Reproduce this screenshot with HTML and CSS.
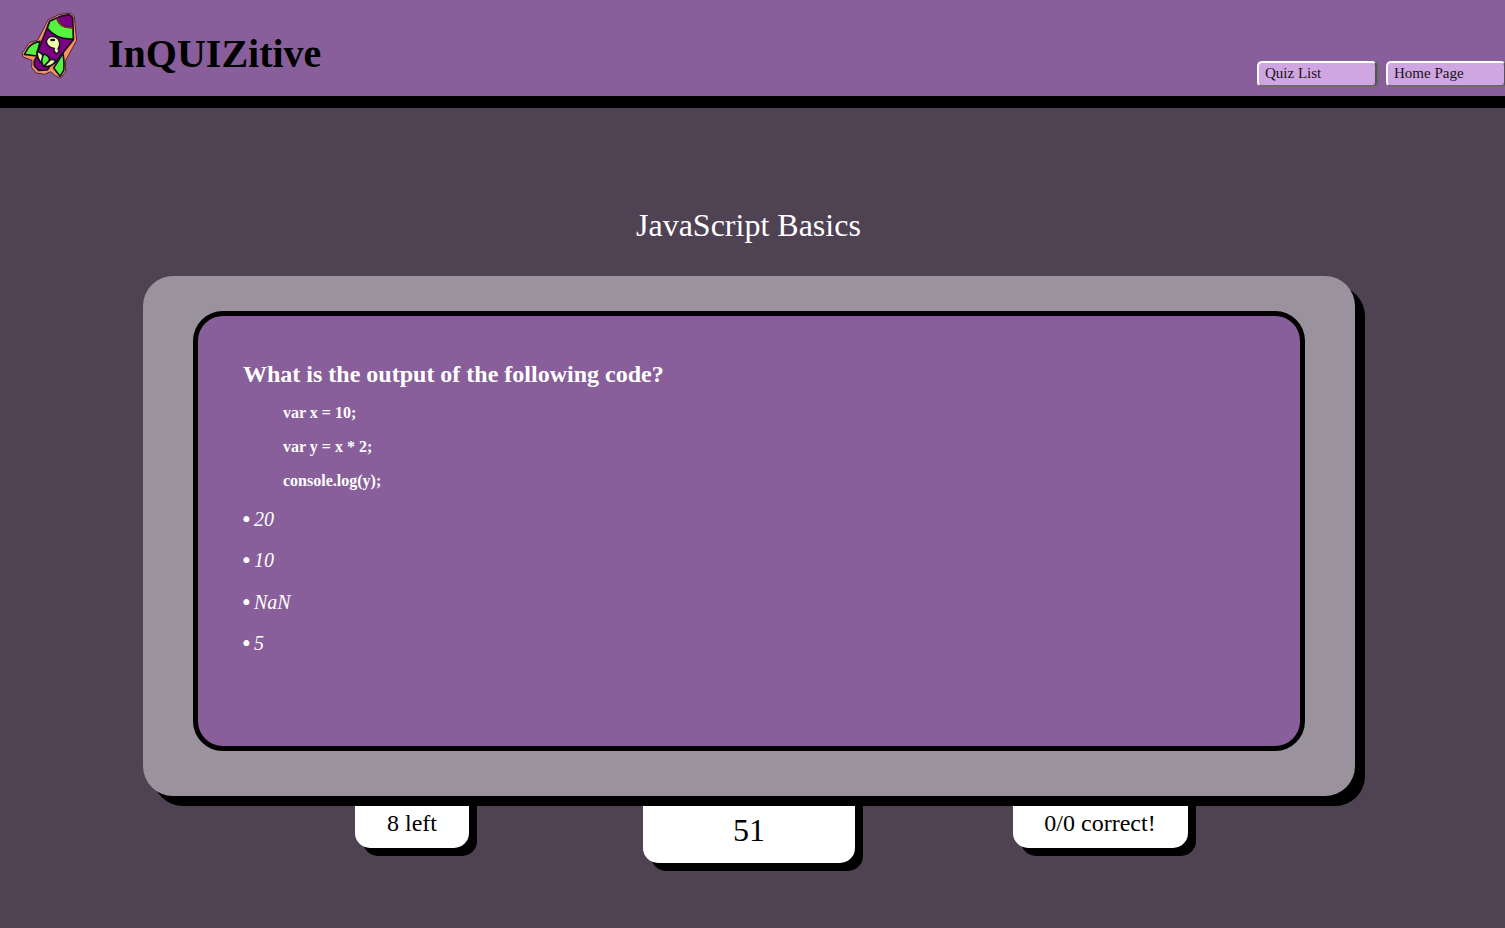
FILE: index.html
```html
<!DOCTYPE html>
<html lang="en">
<head>
<meta charset="utf-8">
<title>InQUIZitive</title>
<link rel="stylesheet" href="styles.css">
</head>
<body>
<header class="header">
  <svg class="logo" viewBox="0 0 240 270" aria-hidden="true">
    <path d="M181 39L193 50L200 121L167 181L167 216L151 235L136 227L122 215L104 223L79 219L65 203L66 181L39 171L36 160L58 128L83 120L106 76L114 60L146 44Z" fill="#f9915a" stroke="#4a2444" stroke-width="3" stroke-linejoin="round"/>
    <g stroke="#171020" stroke-width="5" stroke-linejoin="round">
      <path d="M90 124Q65 129 55 143L43 163L80 168Z" fill="#55f23f"/>
      <path d="M159 160Q164 193 161 212L150 229L131 204Z" fill="#55f23f"/>
      <path d="M79 172Q68 188 75 200L86 211L112 210L120 198Z" fill="#7b0082"/>
      <path d="M118 67L148 50L178 44L188 53L190 119L134 190L82 158Z" fill="#7b0082"/>
      <path d="M119 64L140 54Q150 86 189 82L190 117Q139 120 112 85Z" fill="#55f23f"/>
      <path d="M81 154Q97 158 101 171L96 190Q82 181 81 154Z" fill="#efffa9"/>
      <path d="M137 182Q124 174 113 184L100 199Q127 203 137 182Z" fill="#efffa9"/>
      <path d="M103 161Q121 170 118 182L101 200Q88 184 103 161Z" fill="#55f23f"/>
    </g>
    <path d="M140 53Q153 88 189 83" fill="none" stroke="#9b2638" stroke-width="4"/>
    <path d="M109 125Q113 108 129 110Q147 112 149 130Q149 140 144 147L148 154L139 161L132 153L133 145Q113 143 109 125Z" fill="#efffa9" stroke="#171020" stroke-width="4"/>
    <ellipse cx="128" cy="120" rx="8" ry="4" fill="#171020"/>
  </svg>
  <h1 class="brand">InQUIZitive</h1>
  <nav class="nav">
    <a class="nav-link">Quiz List</a>
    <a class="nav-link">Home Page</a>
  </nav>
</header>
<main class="main">
  <h2 class="quiz-title">JavaScript Basics</h2>
  <section class="board">
    <div class="card">
      <h3 class="question">What is the output of the following code?</h3>
      <div class="code">
        <p class="code-line">var x = 10;</p>
        <p class="code-line">var y = x * 2;</p>
        <p class="code-line">console.log(y);</p>
      </div>
      <ul class="answers">
        <li class="answer"><span class="bullet">•</span>20</li>
        <li class="answer"><span class="bullet">•</span>10</li>
        <li class="answer"><span class="bullet">•</span>NaN</li>
        <li class="answer"><span class="bullet">•</span>5</li>
      </ul>
    </div>
  </section>
  <div class="stats">
    <div class="stat stat-left">8 left</div>
    <div class="stat stat-timer">51</div>
    <div class="stat stat-score">0/0 correct!</div>
  </div>
</main>
</body>
</html>
```

FILE: styles.css
```css
* { box-sizing: border-box; }
body {
  margin: 0;
  height: 928px;
  overflow: hidden;
  background: #4f4253;
  font-family: "Liberation Serif", "Times New Roman", serif;
  color: #fff;
}
h1, h2, h3, p, ul { margin: 0; padding: 0; }
.header {
  display: flex;
  height: 108px;
  padding-left: 10px;
  background: #885f9a;
  border-bottom: 12px solid #000;
}
.logo { width: 80px; height: 90px; flex: none; }
.brand {
  margin: 31px 0 0 18px;
  font-size: 40px;
  line-height: 46px;
  color: #000;
}
.nav {
  display: flex;
  gap: 9px;
  margin: 61px -1px 0 auto;
}
.nav-link {
  width: 120px;
  height: 26px;
  padding-left: 6px;
  background: #d0a6e2;
  border: 2px solid #fff;
  border-right-color: #575059;
  border-bottom-color: #6b6b6b;
  border-radius: 5px;
  box-shadow: 2px 0 #6b6b6b;
  font-size: 15px;
  line-height: 21px;
  color: #171217;
}
.main { display: flex; flex-direction: column; }
.quiz-title {
  margin: 99px 0 32px 636px;
  font-size: 32px;
  font-weight: 400;
  line-height: 37px;
}
.board {
  position: relative;
  z-index: 1;
  width: 1212px;
  height: 520px;
  margin-left: 143px;
  padding: 35px 50px 45px;
  background: #9a929d;
  border-radius: 30px;
  box-shadow: 10px 10px #000;
}
.card {
  height: 440px;
  padding: 44px 45px;
  background: #885f9a;
  border: 5px solid #000;
  border-radius: 30px;
}
.question { font-size: 24px; line-height: 28px; }
.code {
  display: grid;
  gap: 16px;
  margin: 16px 0 0 40px;
}
.code-line { font-size: 16px; font-weight: 700; line-height: 18px; }
.answers { margin-top: 18px; list-style: none; }
.answer {
  display: flex;
  height: 41.4px;
  font-size: 20px;
  font-style: italic;
  line-height: 23px;
}
.bullet {
  width: 11px;
  margin-left: -1px;
  margin-right: 1px;
  font-size: 25px;
  font-style: normal;
  line-height: 24px;
}
.stats {
  display: flex;
  align-items: flex-start;
  margin-left: 355px;
}
.stat {
  height: 52px;
  padding-top: 13px;
  background: #fff;
  border-radius: 0 0 15px 15px;
  box-shadow: 8px 8px #000;
  font-size: 24px;
  line-height: 28px;
  text-align: center;
  color: #000;
}
.stat-left { width: 114px; }
.stat-timer {
  width: 212px;
  height: 67px;
  margin: 0 158px 0 174px;
  padding-top: 16px;
  font-size: 32px;
  line-height: 37px;
}
.stat-score { width: 175px; padding-right: 1px; }
```
